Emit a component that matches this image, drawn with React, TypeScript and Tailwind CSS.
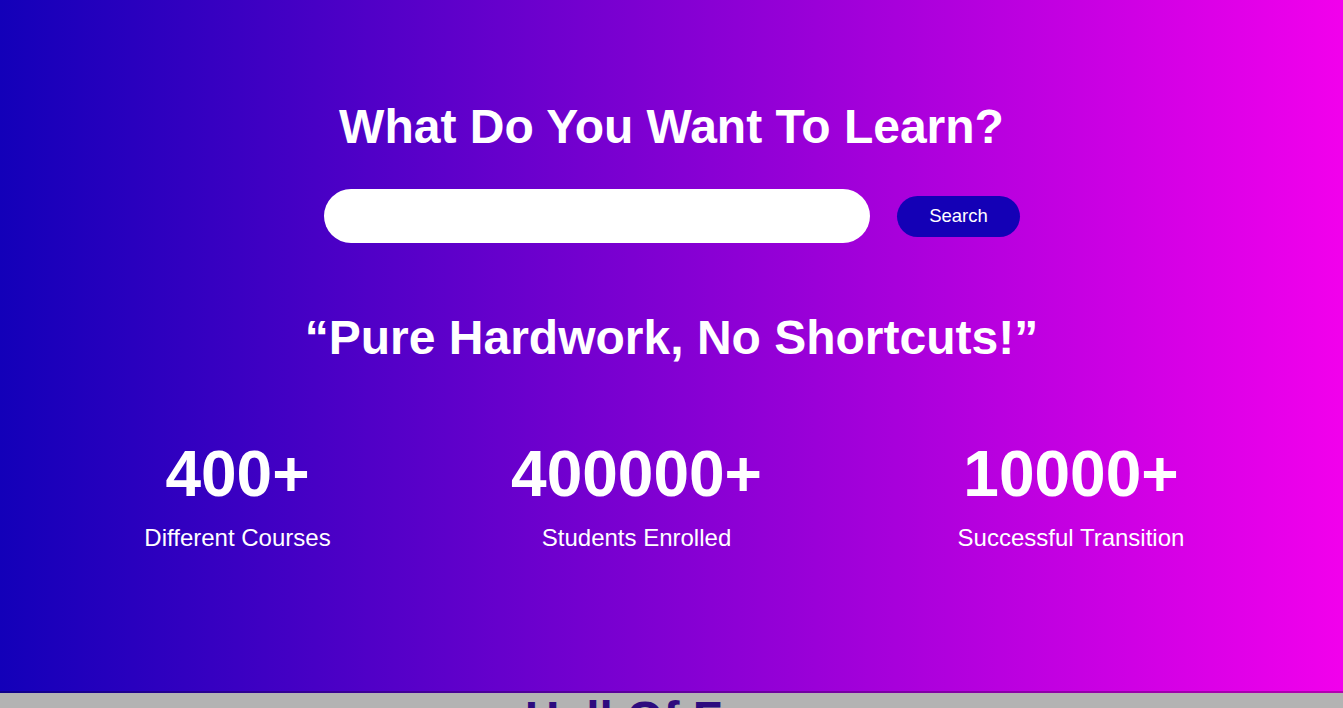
export default function App() {
  return (
    <div className="font-['Liberation_Sans',Arial,sans-serif]">
      <section className="h-[693px] border-b-2 border-black/25 bg-[linear-gradient(to_right,#1300b9,#f200ec)] pt-[99px] text-white">
        <h1 className="text-center text-[48px] font-bold leading-[56px]">
          What Do You Want To Learn?
        </h1>
        <div className="mt-[34px] flex items-center justify-center gap-[27px] pl-[1px]">
          <input
            type="text"
            className="h-[54px] w-[546px] rounded-[27px] bg-white px-6 text-lg text-black outline-none"
          />
          <button className="h-[41px] w-[123px] rounded-full bg-[#1400b6] text-[18.5px] text-white">
            Search
          </button>
        </div>
        <h2 className="mt-[67px] text-center text-[48px] font-bold leading-[56px]">
          “Pure Hardwork, No Shortcuts!”
        </h2>
        <div className="mt-[72px] flex items-start pl-[145px]">
          <div className="flex w-[185px] flex-col items-center whitespace-nowrap">
            <div className="text-[64px] font-bold leading-[72px]">400+</div>
            <div className="mt-[14px] text-[24px] leading-[28px]">Different Courses</div>
          </div>
          <div className="ml-[182px] flex w-[249px] flex-col items-center whitespace-nowrap">
            <div className="text-[64px] font-bold leading-[72px]">400000+</div>
            <div className="mt-[14px] text-[24px] leading-[28px]">Students Enrolled</div>
          </div>
          <div className="ml-[197px] flex w-[226px] flex-col items-center whitespace-nowrap">
            <div className="text-[64px] font-bold leading-[72px]">10000+</div>
            <div className="mt-[14px] text-[24px] leading-[28px]">Successful Transition</div>
          </div>
        </div>
      </section>
      <section className="h-[400px] bg-[#b3b3b3]">
        <h2 className="text-center text-[48px] font-bold leading-[52px] text-[#2d0b7e]">
          Hall Of Fame
        </h2>
      </section>
    </div>
  );
}
